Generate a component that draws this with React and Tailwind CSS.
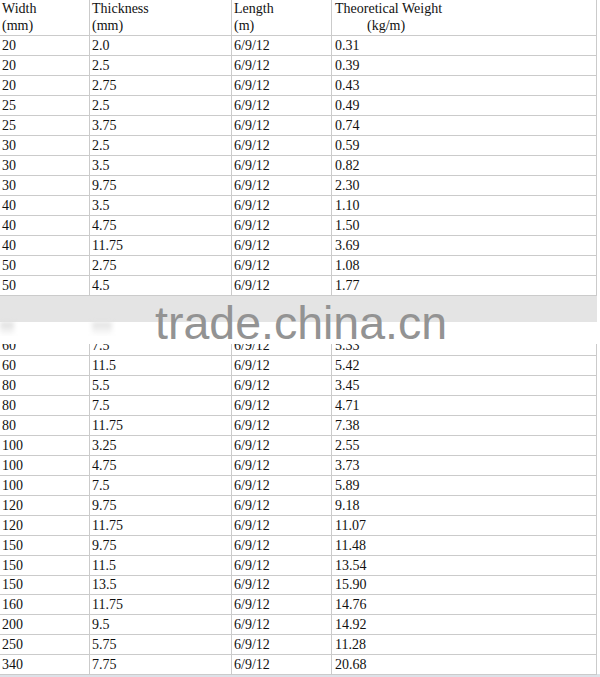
import React from 'react';

const upper = [
  ['20', '2.0', '0.31'],
  ['20', '2.5', '0.39'],
  ['20', '2.75', '0.43'],
  ['25', '2.5', '0.49'],
  ['25', '3.75', '0.74'],
  ['30', '2.5', '0.59'],
  ['30', '3.5', '0.82'],
  ['30', '9.75', '2.30'],
  ['40', '3.5', '1.10'],
  ['40', '4.75', '1.50'],
  ['40', '11.75', '3.69'],
  ['50', '2.75', '1.08'],
  ['50', '4.5', '1.77'],
];

const lower = [
  ['60', '11.5', '5.42'],
  ['80', '5.5', '3.45'],
  ['80', '7.5', '4.71'],
  ['80', '11.75', '7.38'],
  ['100', '3.25', '2.55'],
  ['100', '4.75', '3.73'],
  ['100', '7.5', '5.89'],
  ['120', '9.75', '9.18'],
  ['120', '11.75', '11.07'],
  ['150', '9.75', '11.48'],
  ['150', '11.5', '13.54'],
  ['150', '13.5', '15.90'],
  ['160', '11.75', '14.76'],
  ['200', '9.5', '14.92'],
  ['250', '5.75', '11.28'],
  ['340', '7.75', '20.68'],
];

const cell = 'border-r border-b border-[#cbcbcb] pl-[2px] leading-[19px] h-[20px] overflow-hidden';

const Row = ({ r, short }) => (
  <div className={`grid grid-cols-[90px_142px_100px_265px] ${short ? 'h-[19.8px]' : 'h-[20px]'}`}>
    <div className={cell}>{r[0]}</div>
    <div className={cell}>{r[1]}</div>
    <div className={cell}>6/9/12</div>
    <div className={`${cell} pl-[3px]`}>{r[2]}</div>
  </div>
);

export default function App() {
  return (
    <div
      className="relative w-[600px] h-[677px] bg-white overflow-hidden text-[14px] text-[#111111]"
      style={{ fontFamily: '"Liberation Serif", "Times New Roman", serif' }}
    >
      <div className="w-[597px]">
        {/* header */}
        <div className="grid grid-cols-[90px_142px_100px_265px] h-[36px]">
          <div className="border-r border-b border-[#cbcbcb] pl-[2px] leading-[17px]">
            Width<br />(mm)
          </div>
          <div className="border-r border-b border-[#cbcbcb] pl-[2px] leading-[17px]">
            Thickness<br />(mm)
          </div>
          <div className="border-r border-b border-[#cbcbcb] pl-[2px] leading-[17px]">
            Length<br />(m)
          </div>
          <div className="border-r border-b border-[#cbcbcb] pl-[3px] leading-[17px]">
            Theoretical Weight<br /><span className="pl-[32px]">(kg/m)</span>
          </div>
        </div>

        {upper.map((r, i) => (
          <Row key={i} r={r} />
        ))}

        {/* cut band */}
        <div className="h-[26px] bg-[#e4e4e4]" />
        <div className="relative h-[14px] bg-white">
          <div className="absolute left-0 top-0 w-[14px] h-[14px] bg-gradient-to-b from-[#dcdcdc] to-white blur-[2px]" />
          <div className="absolute left-[92px] top-0 w-[20px] h-[14px] bg-gradient-to-b from-[#e0e0e0] to-white blur-[2px]" />
        </div>
        <div className="relative">
          <Row r={['60', '7.5', '5.33']} />
          <div className="absolute left-0 right-0 top-0 h-[8px] bg-white" />
        </div>

        {lower.map((r, i) => (
          <Row key={i} r={r} short={i >= 8} />
        ))}
      </div>
      <div className="h-[4px] bg-[#dde2e8]" />

      {/* watermark */}
      <div
        className="absolute left-[155px] top-[300px] text-[46.5px] leading-none text-[#939393] whitespace-nowrap"
        style={{ fontFamily: '"Liberation Sans", Arial, sans-serif' }}
      >
        trade.china.cn
      </div>
    </div>
  );
}
